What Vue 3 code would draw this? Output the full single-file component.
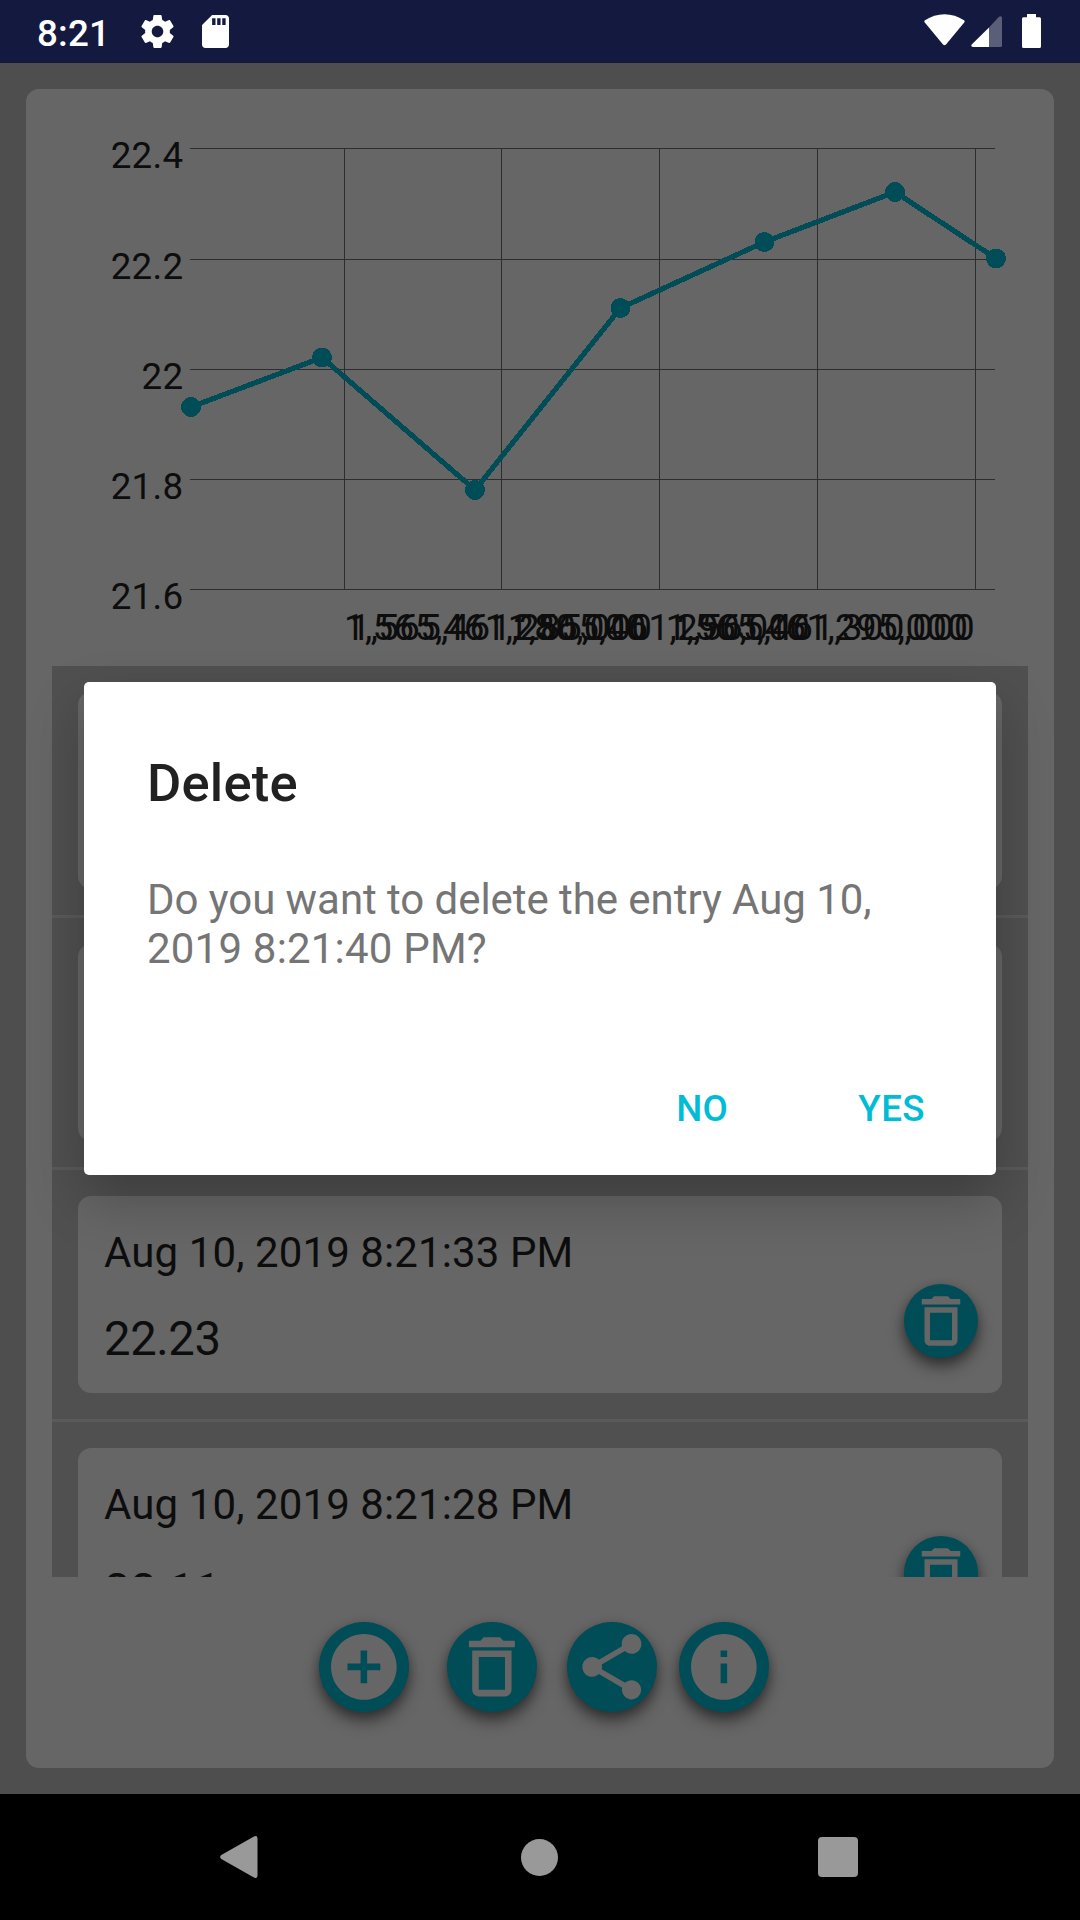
<script setup>
const yTicks = [
  { y: 148, label: '22.4' },
  { y: 259, label: '22.2' },
  { y: 369, label: '22' },
  { y: 479, label: '21.8' },
  { y: 589, label: '21.6' },
]
const xTicks = [
  { x: 344, label: '1,565,461,280,000', anchor: 'start' },
  { x: 501, label: '1,565,461,285,000', anchor: 'middle' },
  { x: 659, label: '1,565,461,290,000', anchor: 'middle' },
  { x: 817, label: '1,565,461,295,000', anchor: 'middle' },
  { x: 975, label: '1,565,461,300,000', anchor: 'end' },
]
const points = [[191, 407], [322, 357.5], [475, 490], [620.5, 308], [764.5, 242], [895, 192], [996, 258.5]]
const linePoints = points.map((p) => p.join(',')).join(' ')

const entries = [
  { time: 'Aug 10, 2019 8:21:40 PM', value: '22.2' },
  { time: 'Aug 10, 2019 8:21:37 PM', value: '22.32' },
  { time: 'Aug 10, 2019 8:21:33 PM', value: '22.23' },
  { time: 'Aug 10, 2019 8:21:28 PM', value: '22.11' },
]

const trash =
  'M6 19c0 1.1.9 2 2 2h8c1.1 0 2-.9 2-2V7H6v12zM8 9h8v10H8V9zm7.5-5l-1-1h-5l-1 1H5v2h14V4h-3.5z'
const actions = [
  {
    name: 'add',
    path: 'M12 2C6.48 2 2 6.48 2 12s4.48 10 10 10 10-4.48 10-10S17.52 2 12 2zm5 11h-4v4h-2v-4H7v-2h4V7h2v4h4v2z',
  },
  { name: 'delete', path: trash },
  {
    name: 'share',
    path: 'M18 16.08c-.76 0-1.44.3-1.96.77L8.91 12.7c.05-.23.09-.46.09-.7s-.04-.47-.09-.7l7.05-4.11c.54.5 1.25.81 2.04.81 1.66 0 3-1.34 3-3s-1.34-3-3-3-3 1.34-3 3c0 .24.04.47.09.7L8.04 9.81C7.5 9.31 6.79 9 6 9c-1.66 0-3 1.34-3 3s1.34 3 3 3c.79 0 1.5-.31 2.04-.81l7.12 4.16c-.05.21-.08.43-.08.65 0 1.61 1.31 2.92 2.92 2.92s2.92-1.31 2.92-2.92-1.31-2.92-2.92-2.92z',
  },
  {
    name: 'info',
    path: 'M12 2C6.48 2 2 6.48 2 12s4.48 10 10 10 10-4.48 10-10S17.52 2 12 2zm1 15h-2v-6h2v6zm0-8h-2V7h2v2z',
  },
]
</script>

<template>
  <div class="screen">
    <header class="status">
      <span class="clock">8:21</span>
      <svg class="gear" viewBox="2 2 20 20">
        <path d="M19.43 12.98c.04-.32.07-.64.07-.98s-.03-.66-.07-.98l2.11-1.65c.19-.15.24-.42.12-.64l-2-3.46c-.12-.22-.39-.3-.61-.22l-2.49 1c-.52-.4-1.08-.73-1.69-.98l-.38-2.65C14.46 2.18 14.25 2 14 2h-4c-.25 0-.46.18-.49.42l-.38 2.65c-.61.25-1.17.59-1.69.98l-2.49-1c-.23-.09-.49 0-.61.22l-2 3.46c-.13.22-.07.49.12.64l2.11 1.65c-.04.32-.07.65-.07.98s.03.66.07.98l-2.11 1.65c-.19.15-.24.42-.12.64l2 3.46c.12.22.39.3.61.22l2.49-1c.52.4 1.08.73 1.69.98l.38 2.65c.03.24.24.42.49.42h4c.25 0 .46-.18.49-.42l.38-2.65c.61-.25 1.17-.59 1.69-.98l2.49 1c.23.09.49 0 .61-.22l2-3.46c.12-.22.07-.49-.12-.64l-2.11-1.65zM12 15.5c-1.93 0-3.5-1.57-3.5-3.5s1.57-3.5 3.5-3.5 3.5 1.57 3.5 3.5-1.57 3.5-3.5 3.5z" />
      </svg>
      <svg class="sd" viewBox="4 2 16 20" preserveAspectRatio="none">
        <path d="M18 2h-8L4.02 8 4 20c0 1.1.9 2 2 2h12c1.1 0 2-.9 2-2V4c0-1.1-.9-2-2-2zm-6 6h-2V4h2v4zm3 0h-2V4h2v4zm3 0h-2V4h2v4z" />
      </svg>
      <span class="spacer"></span>
      <svg class="wifi" viewBox="0 0 41 32">
        <path d="M1 6.2Q10 .2 20.500 .2T40 6.200Q41.200 7.200 40.200 8.600L22 30.500Q20.500 32 19 30.500L.8 8.600Q-.2 7.200 1 6.200z" />
      </svg>
      <svg class="signal" viewBox="0 0 31 31">
        <path class="faint" d="M18 31V11.500L28 .8Q31-1 31 2V29.500Q31 31 29.500 31z" />
        <path d="M18 31V11.500L.7 28.400Q-.6 31 2 31z" />
      </svg>
      <svg class="battery" viewBox="0 0 19 34">
        <path d="M5 0h9v3.200h3.500Q19 3.200 19 4.700V32.500Q19 34 17.500 34h-16Q0 34 0 32.500V4.700Q0 3.200 1.500 3.200H5z" />
      </svg>
    </header>

    <main class="content">
      <section class="card">
        <svg class="chart" viewBox="26 89 1028 577">
          <g class="grid">
            <rect v-for="t in yTicks" :key="t.label" x="190" :y="t.y" width="805" height="1" />
            <rect v-for="t in xTicks" :key="t.label" :x="t.x" y="148" width="1" height="441" />
          </g>
          <g class="labels">
            <text v-for="t in yTicks" :key="t.label" x="183.500" :y="t.y + 20" text-anchor="end">{{ t.label }}</text>
            <text v-for="t in xTicks" :key="t.label" :x="t.x" y="640" :text-anchor="t.anchor">{{ t.label }}</text>
          </g>
          <g class="series">
            <polyline :points="linePoints" />
            <circle v-for="p in points" :key="p[0]" :cx="p[0]" :cy="p[1]" r="10" />
          </g>
        </svg>

        <div class="list">
          <div v-for="e in entries" :key="e.time" class="item">
            <article class="entry">
              <div class="texts">
                <div class="time">{{ e.time }}</div>
                <div class="value">{{ e.value }}</div>
              </div>
              <button class="fab small" type="button" aria-label="delete">
                <svg viewBox="0 0 24 24"><path :d="trash" /></svg>
              </button>
            </article>
          </div>
        </div>

        <footer class="actions">
          <button v-for="a in actions" :key="a.name" class="fab" :class="a.name" type="button" :aria-label="a.name">
            <svg viewBox="0 0 24 24"><path :d="a.path" /></svg>
          </button>
        </footer>
      </section>
    </main>

    <nav class="navbar">
      <svg class="back" viewBox="0 0 38 42">
        <path d="M33.500 .8Q37.500-1.500 37.500 3V39Q37.500 43.500 33.500 41.200L1.300 23Q-1 21 1.300 19z" />
      </svg>
      <span class="home"></span>
      <span class="recent"></span>
    </nav>

    <div class="dialog" role="dialog">
      <h1>Delete</h1>
      <p>
        <span class="line">Do you want to delete the entry Aug 10,</span>
        <span class="line numeric">2019 8:21:40 PM?</span>
      </p>
      <div class="buttons">
        <button type="button">NO</button>
        <button type="button">YES</button>
      </div>
    </div>
  </div>
</template>

<style>
body {
  margin: 0;
  background: #4e4e4e;
}
</style>

<style scoped>
.screen {
  position: relative;
  display: flex;
  flex-direction: column;
  width: 1080px;
  height: 1920px;
  overflow: hidden;
  background: #4e4e4e;
  font-family: Roboto, "Liberation Sans", sans-serif;
}
button {
  padding: 0;
  border: 0;
  background: none;
  font: inherit;
}
svg {
  display: block;
  flex: none;
}
.status {
  display: flex;
  align-items: flex-start;
  box-sizing: border-box;
  height: 63px;
  padding: 0 39px 0 37px;
  background: #141940;
  color: #fff;
}
.status svg {
  fill: #fff;
}
.clock {
  width: 103.5px;
  padding-top: 12px;
  font-size: 36.75px;
  font-weight: 500;
  line-height: 43px;
  letter-spacing: 0.2px;
}
.gear {
  width: 33px;
  height: 33px;
  margin-top: 15px;
}
.sd {
  width: 27px;
  height: 33px;
  margin: 15px 0 0 28px;
}
.spacer {
  flex: 1;
}
.wifi {
  width: 41px;
  height: 32px;
  margin-top: 14px;
}
.signal {
  width: 31px;
  height: 31px;
  margin: 16px 20px 0 6px;
}
.signal .faint {
  fill: #5b5e79;
}
.battery {
  width: 19px;
  height: 34px;
  margin-top: 14px;
}
.content {
  flex: 1;
  padding: 26px;
}
.card {
  display: flex;
  flex-direction: column;
  height: 1679px;
  border-radius: 13px;
  background: #666;
}
.chart {
  width: 1028px;
  height: 577px;
}
.grid {
  fill: #2d2d2d;
  shape-rendering: crispEdges;
}
.labels {
  fill: #0d0d0d;
  font-size: 36.75px;
  letter-spacing: 0.3px;
}
.series {
  fill: #004c57;
  shape-rendering: crispEdges;
}
.series polyline {
  fill: none;
  stroke: #004c57;
  stroke-width: 5.2;
}
.list {
  height: 911px;
  margin: 0 26px;
  overflow: hidden;
  background: #505050;
}
.item {
  box-sizing: border-box;
  height: 252px;
  padding: 26px;
  border-bottom: 3px solid #5a5a5a;
}
.entry {
  display: flex;
  justify-content: space-between;
  height: 197px;
  border-radius: 13px;
  background: #666;
}
.texts {
  padding: 32px 0 0 26px;
  color: #0d0d0d;
}
.time {
  font-size: 42px;
  line-height: 49px;
  letter-spacing: 0.1px;
}
.value {
  margin-top: 35px;
  font-size: 47.25px;
  line-height: 55px;
  letter-spacing: -0.4px;
}
.fab {
  display: flex;
  align-items: center;
  justify-content: center;
  width: 90px;
  height: 90px;
  border-radius: 50%;
  background: #004c57;
  box-shadow: 0 9px 16px rgba(0, 0, 0, 0.46), 0 3px 10px rgba(0, 0, 0, 0.2);
}
.fab svg {
  width: 78.75px;
  height: 78.75px;
  fill: #666;
  transform: translate(-0.5px, -0.5px);
}
.fab.small {
  width: 74px;
  height: 74px;
  margin: 88px 24px 0 0;
}
.fab.small svg {
  width: 66px;
  height: 66px;
  transform: none;
}
.actions {
  display: flex;
  padding: 45px 0 0 293px;
}
.fab.delete {
  margin-left: 38px;
}
.fab.share {
  margin-left: 30px;
}
.fab.info {
  margin-left: 22px;
}
.navbar {
  display: flex;
  align-items: center;
  box-sizing: border-box;
  height: 126px;
  padding-left: 219.5px;
  background: #000;
}
.back {
  width: 38px;
  height: 42px;
  fill: #999;
}
.home {
  width: 37px;
  height: 37px;
  margin-left: 263.5px;
  border-radius: 50%;
  background: #999;
}
.recent {
  width: 40px;
  height: 40px;
  margin-left: 260px;
  border-radius: 4px;
  background: #999;
}
.dialog {
  position: absolute;
  left: 84px;
  top: 682px;
  box-sizing: border-box;
  width: 912px;
  height: 493px;
  padding: 70px 63px 0;
  border-radius: 5px;
  background: #fff;
  box-shadow: 0 24px 56px rgba(0, 0, 0, 0.24);
}
h1 {
  margin: 0;
  color: #212121;
  font-size: 52.5px;
  font-weight: 500;
  line-height: 62px;
  letter-spacing: 0.2px;
}
p {
  margin: 61px 0 0;
  color: #757575;
  font-size: 42px;
  line-height: 49px;
  white-space: nowrap;
}
.line {
  display: block;
  letter-spacing: -0.06px;
}
.line.numeric {
  letter-spacing: 0.2px;
}
.buttons {
  display: flex;
  justify-content: flex-end;
  gap: 130px;
  padding-right: 8px;
  margin-top: 114px;
}
.buttons button {
  color: #00bcd4;
  font-size: 36.75px;
  font-weight: 500;
  line-height: 43px;
  letter-spacing: 0.4px;
}
</style>
